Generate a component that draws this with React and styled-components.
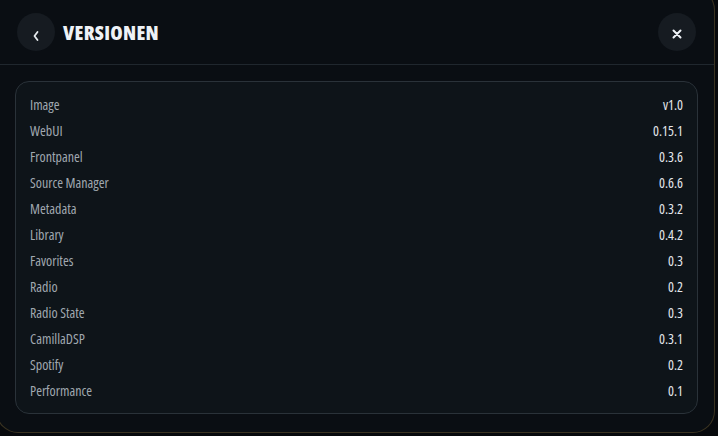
import React from "react";
import styled, { createGlobalStyle } from "styled-components";

const Global = createGlobalStyle`
  html, body { margin: 0; padding: 0; background: #07090c; }
  body { width: 718px; height: 436px; overflow: hidden; }
  * { box-sizing: border-box; }
`;

const font = `"Open Sans", "Noto Sans", sans-serif`;

const Modal = styled.div`
  margin: -12px 0 0 -4px;
  width: 719px;
  height: 445px;
  background: #0a0e13;
  border: 1px solid rgba(150, 120, 60, 0.35);
  border-radius: 22px;
  display: flex;
  flex-direction: column;
  overflow: hidden;
  font-family: ${font};
  font-stretch: 75%;
`;

const Header = styled.div`
  height: 76px;
  padding: 11px 18px 0 20px;
  display: flex;
  align-items: center;
  gap: 8px;
  border-bottom: 1px solid #20272e;
`;

const RoundButton = styled.button`
  width: 38px;
  height: 38px;
  border-radius: 50%;
  border: none;
  background: #161b21;
  color: #e6eaee;
  display: flex;
  align-items: center;
  justify-content: center;
  padding: 0;
  cursor: pointer;
`;

const Icon = styled.svg`
  margin-top: ${(p) => p.$drop}px;
`;

const Title = styled.h1`
  margin: 0;
  flex: 1;
  font-family: ${font};
  font-stretch: 75%;
  font-weight: 800;
  font-size: 20px;
  letter-spacing: 0.3px;
  color: #eef2f6;
`;

const Body = styled.div`
  padding: 16px 16px 18px 18px;
  flex: 1;
  display: flex;
`;

const Card = styled.div`
  flex: 1;
  border: 1px solid #2a3239;
  border-radius: 14px;
  background: #0e1419;
  padding: 9px 14px 9px 14px;
  display: flex;
  flex-direction: column;
`;

const Row = styled.div`
  height: 26px;
  display: flex;
  align-items: center;
  justify-content: space-between;
  font-size: 14px;
  font-stretch: 82%;
`;

const Label = styled.span`
  color: #a0a8b0;
`;

const Value = styled.span`
  color: #e3e7ec;
  font-weight: 500;
  font-stretch: 78%;
`;

const rows = [
  ["Image", "v1.0"],
  ["WebUI", "0.15.1"],
  ["Frontpanel", "0.3.6"],
  ["Source Manager", "0.6.6"],
  ["Metadata", "0.3.2"],
  ["Library", "0.4.2"],
  ["Favorites", "0.3"],
  ["Radio", "0.2"],
  ["Radio State", "0.3"],
  ["CamillaDSP", "0.3.1"],
  ["Spotify", "0.2"],
  ["Performance", "0.1"],
];

export default function App() {
  return (
    <>
      <Global />
      <Modal>
        <Header>
          <RoundButton aria-label="Zurück">
            <Icon $drop={8} width="8" height="12" viewBox="0 0 8 12">
              <path d="M5.5 2 L2.5 6 L5.5 10" stroke="#e6eaee" strokeWidth="1.8" fill="none" strokeLinecap="round" strokeLinejoin="round" />
            </Icon>
          </RoundButton>
          <Title>VERSIONEN</Title>
          <RoundButton aria-label="Schließen">
            <Icon $drop={4} width="12" height="12" viewBox="0 0 12 12">
              <path d="M2.5 2.5 L9.5 9.5 M9.5 2.5 L2.5 9.5" stroke="#eef2f6" strokeWidth="2" strokeLinecap="round" />
            </Icon>
          </RoundButton>
        </Header>
        <Body>
          <Card>
            {rows.map(([k, v]) => (
              <Row key={k}>
                <Label>{k}</Label>
                <Value>{v}</Value>
              </Row>
            ))}
          </Card>
        </Body>
      </Modal>
    </>
  );
}
